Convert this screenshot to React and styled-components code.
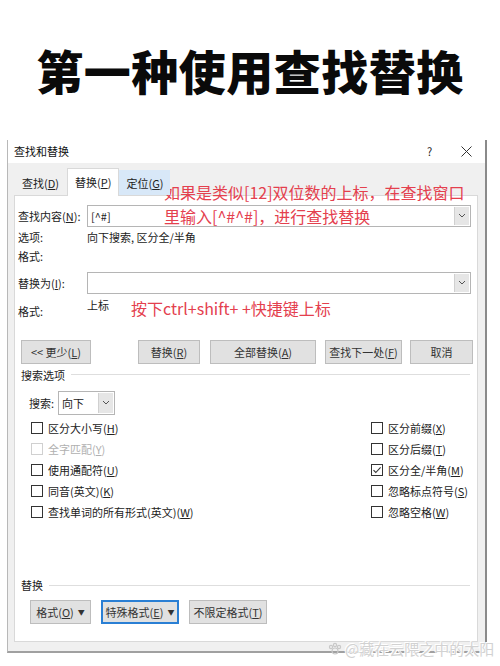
import React from "react";
import styled, { createGlobalStyle } from "styled-components";

const Global = createGlobalStyle`
  html, body { margin: 0; padding: 0; background: #fff; }
  body { font-family: "Noto Sans CJK SC", "Noto Sans", sans-serif; color: #222; }
  * { box-sizing: border-box; }
`;

const Page = styled.div`
  width: 500px;
  height: 666px;
  position: relative;
  overflow: hidden;
  background: #fff;
`;

const Headline = styled.h1`
  margin: 0;
  height: 140px;
  display: flex;
  align-items: center;
  justify-content: center;
  padding-bottom: 2px;
  font-family: "Noto Sans CJK SC", sans-serif;
  font-weight: 900;
  font-size: 47px;
  letter-spacing: 0.5px;
  color: #0a0a0a;
`;

const Dialog = styled.div`
  margin-left: 7px;
  width: 480px;
  height: 513px;
  background: #f0f0f0;
  border-left: 1px solid #b8b8b8;
  border-right: 2px solid #8a8a8a;
  border-bottom: 2px solid #a0a0a0;
  display: flex;
  flex-direction: column;
  position: relative;
  font-size: 11px;
`;

const TitleBar = styled.div`
  height: 23px;
  background: #fff;
  display: flex;
  align-items: center;
  padding-left: 6px;
  font-size: 11px;
  color: #111;
`;

const TitleText = styled.span`
  flex: 1;
`;

const TitleBtn = styled.span`
  width: 37px;
  display: flex;
  justify-content: center;
  align-items: center;
  font-size: 11px;
  color: #222;
`;

const TabStrip = styled.div`
  display: flex;
  align-items: flex-end;
  height: 32px;
  padding-left: 6px;
`;

const Tab = styled.div`
  height: ${(p) => (p.$active ? 28 : 25)}px;
  padding: 0 ${(p) => p.$pad || 6}px;
  display: flex;
  align-items: center;
  justify-content: center;
  font-size: 11px;
  color: #222;
  white-space: nowrap;
  background: ${(p) => (p.$active ? "#fff" : p.$hover ? "#d8e8f8" : "transparent")};
  border: 1px solid ${(p) => (p.$active ? "#d9d9d9" : "transparent")};
  border-bottom: none;
  margin-bottom: ${(p) => (p.$active ? -1 : 0)}px;
  position: relative;
  z-index: 1;
`;

const Panel = styled.div`
  margin: 0 7px 9px 6px;
  height: 448px;
  background: #fff;
  border: 1px solid #d9d9d9;
  padding: 9px 6px 0 3px;
  display: flex;
  flex-direction: column;
`;

const FieldRow = styled.div`
  display: flex;
  align-items: center;
  height: ${(p) => p.$h}px;
  margin-top: ${(p) => p.$mt || 0}px;
`;

const Label = styled.span`
  width: 69px;
  flex-shrink: 0;
  color: #222;
  line-height: 14px;
  white-space: nowrap;
`;

const Combo = styled.div`
  width: 386px;
  height: 22px;
  border: 1px solid #b5b5b5;
  display: flex;
  align-items: stretch;
  background: #fff;
`;

const ComboText = styled.span`
  flex: 1;
  padding-left: 3px;
  display: flex;
  align-items: center;
  font-size: 11px;
  color: #222;
`;

const ArrowBox = styled.span`
  width: 15px;
  margin: 1px;
  background: #e6e6e6;
  border-left: 1px solid #d0d0d0;
  display: flex;
  align-items: center;
  justify-content: center;
`;

const Value = styled.span`
  color: #222;
  line-height: 14px;
  margin-top: ${(p) => p.$mt || 0}px;
  align-self: ${(p) => (p.$top ? "flex-start" : "center")};
`;

const FmtRow = styled.div`
  display: flex;
  height: 34px;
`;

const FmtLabel = styled(Label)`
  margin-top: 10px;
`;

const ButtonRow = styled.div`
  display: flex;
  height: 24px;
  margin-top: ${(p) => p.$mt || 0}px;
  padding-left: ${(p) => p.$pl || 0}px;
`;

const Btn = styled.div`
  width: ${(p) => p.$w}px;
  height: 24px;
  flex-shrink: 0;
  margin-left: ${(p) => p.$ml || 0}px;
  background: #e1e1e1;
  border: ${(p) => (p.$focus ? "2px solid #2a7fd4" : "1px solid #bdbdbd")};
  display: flex;
  align-items: center;
  justify-content: center;
  gap: 4px;
  font-size: 11px;
  color: #333;
  white-space: nowrap;
`;

const Caret = styled.span`
  font-size: 7px;
  color: #333;
`;

const GroupHead = styled.div`
  display: flex;
  align-items: center;
  height: 22px;
  margin-top: ${(p) => p.$mt || 0}px;
  padding-left: 3px;
  gap: 6px;
  color: #222;
  &::after {
    content: "";
    flex: 1;
    height: 1px;
    background: #dedede;
    margin-right: 1px;
  }
`;

const SearchRow = styled.div`
  display: flex;
  align-items: center;
  height: 24px;
  margin-top: 5px;
  padding-left: 11px;
  gap: 4px;
`;

const Select = styled.div`
  width: 57px;
  height: 24px;
  border: 1px solid #b5b5b5;
  display: flex;
  background: #fff;
`;

const Checks = styled.div`
  display: grid;
  grid-template-columns: 340px 1fr;
  grid-auto-rows: 21px;
  padding-left: 13px;
  margin-top: 3px;
`;

const CheckItem = styled.div`
  display: flex;
  align-items: center;
  gap: 5px;
  white-space: nowrap;
  grid-column: ${(p) => p.$col};
  grid-row: ${(p) => p.$row};
  color: ${(p) => (p.$disabled ? "#b0b0b0" : "#222")};
`;

const Box = styled.span`
  width: 12px;
  height: 12px;
  border: 1px solid ${(p) => (p.$disabled ? "#d0d0d0" : "#333")};
  background: #fff;
  display: flex;
  align-items: center;
  justify-content: center;
`;

const Spacer = styled.div`
  flex: 1;
`;

const BottomPad = styled.div`
  height: 17px;
`;

const Note = styled.div`
  position: absolute;
  left: ${(p) => p.$x}px;
  top: ${(p) => p.$y}px;
  font-size: ${(p) => p.$size}px;
  line-height: ${(p) => p.$lh || 24}px;
  color: #e4404e;
  white-space: nowrap;
  font-family: "Noto Sans CJK SC", sans-serif;
`;

const Watermark = styled.div`
  position: absolute;
  left: 328px;
  top: 638px;
  font-size: 15px;
  color: #d2d2d2;
  display: flex;
  align-items: center;
  gap: 3px;
  white-space: nowrap;
  text-shadow: 0 0 1px #fff, 0 0 1px #fff, 1px 1px 0 #fff, -1px -1px 0 #fff;
`;

const Chevron = () => (
  <svg width="8" height="5" viewBox="0 0 8 5">
    <path d="M1 1l3 3 3-3" fill="none" stroke="#555" strokeWidth="1" />
  </svg>
);

const Check = () => (
  <svg width="10" height="10" viewBox="0 0 10 10">
    <path d="M1.5 5.2l2.3 2.3 4.8-5.2" fill="none" stroke="#333" strokeWidth="1.1" />
  </svg>
);

const U = styled.span`
  text-decoration: underline;
`;

const Lbl = ({ t, k, tail = ")" }) => (
  <span>
    {t}(<U>{k}</U>{tail}
  </span>
);

const leftChecks = [
  { t: "区分大小写", k: "H" },
  { t: "全字匹配", k: "Y", disabled: true },
  { t: "使用通配符", k: "U" },
  { t: "同音(英文)", k: "K" },
  { t: "查找单词的所有形式(英文)", k: "W" },
];
const rightChecks = [
  { t: "区分前缀", k: "X" },
  { t: "区分后缀", k: "T" },
  { t: "区分全/半角", k: "M", checked: true },
  { t: "忽略标点符号", k: "S" },
  { t: "忽略空格", k: "W" },
];

export default function App() {
  return (
    <Page>
      <Global />
      <Headline>第一种使用查找替换</Headline>
      <Dialog>
        <TitleBar>
          <TitleText>查找和替换</TitleText>
          <TitleBtn>?</TitleBtn>
          <TitleBtn>
            <svg width="11" height="11" viewBox="0 0 11 11">
              <path d="M0.5 0.5l10 10M10.5 0.5l-10 10" stroke="#333" strokeWidth="1" />
            </svg>
          </TitleBtn>
        </TitleBar>
        <TabStrip>
          <Tab $pad={7}><Lbl t="查找" k="D" /></Tab>
          <Tab $active $pad={7}><Lbl t="替换" k="P" /></Tab>
          <Tab $hover $pad={6}><Lbl t="定位" k="G" /></Tab>
        </TabStrip>
        <Panel>
          <FieldRow $h={22}>
            <Label><Lbl t="查找内容" k="N" tail="):" /></Label>
            <Combo>
              <ComboText>[^#]</ComboText>
              <ArrowBox>
                <Chevron />
              </ArrowBox>
            </Combo>
          </FieldRow>
          <FieldRow $h={20}>
            <Label>选项:</Label>
            <Value>向下搜索, 区分全/半角</Value>
          </FieldRow>
          <FieldRow $h={18}>
            <Label>格式:</Label>
          </FieldRow>
          <FieldRow $h={22} $mt={7}>
            <Label><Lbl t="替换为" k="I" tail="):" /></Label>
            <Combo>
              <ComboText />
              <ArrowBox>
                <Chevron />
              </ArrowBox>
            </Combo>
          </FieldRow>
          <FmtRow>
            <FmtLabel>格式:</FmtLabel>
            <Value $top $mt={4}>
              上标
            </Value>
          </FmtRow>
          <ButtonRow $mt={12} $pl={3}>
            <Btn $w={70}><span>&lt;&lt; 更少(<U>L</U>)</span></Btn>
            <Btn $w={62} $ml={47}><Lbl t="替换" k="R" /></Btn>
            <Btn $w={106} $ml={10}><Lbl t="全部替换" k="A" /></Btn>
            <Btn $w={77} $ml={9}><Lbl t="查找下一处" k="F" /></Btn>
            <Btn $w={63} $ml={8}>取消</Btn>
          </ButtonRow>
          <GroupHead>搜索选项</GroupHead>
          <SearchRow>
            <span>搜索:</span>
            <Select>
              <ComboText>向下</ComboText>
              <ArrowBox>
                <Chevron />
              </ArrowBox>
            </Select>
          </SearchRow>
          <Checks>
            {leftChecks.map((c, i) => (
              <CheckItem key={c.t} $col={1} $row={i + 1} $disabled={c.disabled}>
                <Box $disabled={c.disabled} />
                <Lbl t={c.t} k={c.k} />
              </CheckItem>
            ))}
            {rightChecks.map((c, i) => (
              <CheckItem key={c.t} $col={2} $row={i + 1}>
                <Box>{c.checked && <Check />}</Box>
                <Lbl t={c.t} k={c.k} />
              </CheckItem>
            ))}
          </Checks>
          <Spacer />
          <GroupHead>替换</GroupHead>
          <ButtonRow $mt={4} $pl={12}>
            <Btn $w={61}>
              <Lbl t="格式" k="O" />
              <Caret>▼</Caret>
            </Btn>
            <Btn $w={78} $ml={10} $focus>
              <Lbl t="特殊格式" k="E" />
              <Caret>▼</Caret>
            </Btn>
            <Btn $w={78} $ml={10}><Lbl t="不限定格式" k="T" /></Btn>
          </ButtonRow>
          <BottomPad />
        </Panel>
        <Note $x={156} $y={40} $size={16} $lh={24}>
          如果是类似[12]双位数的上标，在查找窗口
          <br />
          里输入[^#^#]，进行查找替换
        </Note>
        <Note $x={123} $y={156} $size={16}>
          按下ctrl+shift+ +快捷键上标
        </Note>
      </Dialog>
      <Watermark>
        <svg width="14" height="14" viewBox="0 0 14 14">
          <g fill="none" stroke="#c8c8c8" strokeWidth="1.2">
            <circle cx="7" cy="9" r="3" />
            <circle cx="3" cy="5" r="1.6" />
            <circle cx="7" cy="3" r="1.6" />
            <circle cx="11" cy="5" r="1.6" />
          </g>
        </svg>
        @藏在云隈之中的太阳
      </Watermark>
    </Page>
  );
}
